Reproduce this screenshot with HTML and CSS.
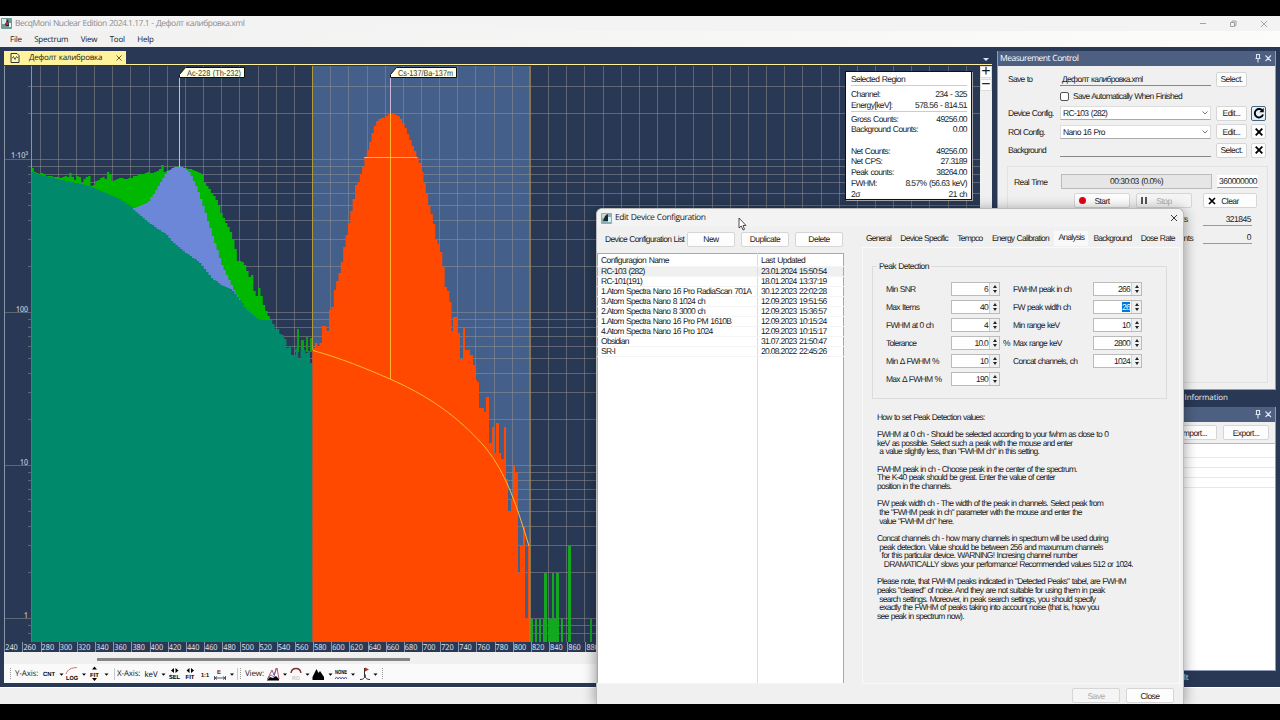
FILE: index.html
```html
<!DOCTYPE html>
<html lang="en">
<head>
    <meta charset="UTF-8">
    <meta name="viewport" content="width=device-width, initial-scale=1.0">
    <title>BecqMoni Nuclear Edition</title>
    <link rel="stylesheet" href="styles.css">
</head>
<body>
    <div class="app">
        <header class="titlebar">
            <svg class="app-icon" viewBox="0 0 11 11"><rect width="11" height="11" rx="1" fill="#6d9c99"/><path d="M1 1h4v5H1z" fill="#d8ecea"/><path d="M2 2l2 4 3-5 1 7H5z" fill="#1d2530"/><path d="M5 4h2v3H5z" fill="#c02a3a"/><path d="M8 5h2v4H8z" fill="#e8f4f4"/></svg>
            <span class="title-text">BecqMoni Nuclear Edition 2024.1.17.1 - Дефолт калибровка.xml</span>
            <svg class="win-buttons" viewBox="0 0 70 14"><path d="M0 6.500h6M61 4l6 6M67 4l-6 6M30.500 5.500h4v4h-4zM32 5.500v-1.500h4v4.500h-1.500" fill="none" stroke="#9a9a9a" stroke-width=".9"/></svg>
        </header>
        <nav class="menu">
            <span>File</span><span>Spectrum</span><span>View</span><span>Tool</span><span>Help</span>
        </nav>

        <div class="workspace">
            <main class="document">
                <div class="doc-tabs">
                    <div class="doc-tab">
                        <svg class="doc-icon" viewBox="0 0 10 10"><path d="M1 .5h6l2 2v7H1z" fill="#fff6b0" stroke="#333"/><path d="M2 5.500l1.500-2 1.500 3 1.500-3L8 5" fill="none" stroke="#333" stroke-width=".8"/></svg>
                        <span>Дефолт калибровка</span>
                        <svg class="tab-close" viewBox="0 0 6 6"><path d="M.5.5l5 5M5.500.5l-5 5" stroke="#6a6030"/></svg>
                    </div>
                    <i class="drop"></i>
                </div>
                <div class="chart-row">
                    <svg id="chart" class="chart" viewBox="4 66 976 586"></svg>
                    <div class="chart-zoom"><b>+</b><b>−</b></div>
                    <div class="region-box">
                        <h4>Selected Region</h4>
                        <p><span>Channel:</span><span>234 - 325</span></p>
                        <p class="line"><span>Energy[keV]:</span><span>578.56 - 814.51</span></p>
                        <p><span>Gross Counts:</span><span>49256.00</span></p>
                        <p class="gap"><span>Background Counts:</span><span>0.00</span></p>
                        <p><span>Net Counts:</span><span>49256.00</span></p>
                        <p><span>Net CPS:</span><span>27.3189</span></p>
                        <p><span>Peak counts:</span><span>38264.00</span></p>
                        <p><span>FWHM:</span><span>8.57% (56.63 keV)</span></p>
                        <p><span>2σ</span><span>21 ch</span></p>
                    </div>
                </div>
                <div class="scrollbar"><div class="thumb"></div></div>
                <div class="toolbar">
                    <i class="grip"></i><span class="lbl y-lbl">Y-Axis:</span>
                    <svg class="tools" viewBox="42 0 72 18"><g class="pix"><text x="43" y="11" textLength="12" lengthAdjust="spacingAndGlyphs">CNT</text><text x="66" y="14.500" textLength="12" lengthAdjust="spacingAndGlyphs">LOG</text><text x="90" y="11.500" textLength="9" lengthAdjust="spacingAndGlyphs">FIT</text></g><path d="M66 9c2-5 5-6 11-6.500" fill="none" stroke="#c77"/><path d="M94.500 1.500l2.500 3h-5zM94.500 16l2.500-3h-5zM59.500 8.500h4l-2 2.200zM82 8.500h4l-2 2.200zM104.500 8.500h4l-2 2.200z"/></svg>
                    <i class="sep"></i><span class="lbl x-lbl">X-Axis:</span>
                    <svg class="tools" viewBox="143 0 93 18"><g class="pix"><text class="kev" x="143.500" y="11.500" textLength="13" lengthAdjust="spacingAndGlyphs">keV</text><text x="168" y="14" textLength="11" lengthAdjust="spacingAndGlyphs">SEL</text><text x="184.500" y="14" textLength="9" lengthAdjust="spacingAndGlyphs">FIT</text><text x="200" y="11.500" textLength="8" lengthAdjust="spacingAndGlyphs">1:1</text><text x="216" y="9" fill="#8b2020">E</text></g><path d="M160.500 8.500h4l-2 2.200zM229 8.500h4l-2 2.200zM173 3v5l-3-2.500zM174.500 3v5l3-2.500zM188.500 3v5l-3-2.500zM190 3v5l3-2.500z"/><path d="M213.500 11v4M224.500 11v4M214 13h10M216 11.500l-2 1.500 2 1.500M222 11.500l2 1.500-2 1.500" fill="none" stroke="#446" stroke-width=".9"/></svg>
                    <i class="sep"></i><i class="grip g2"></i><span class="lbl v-lbl">View:</span>
                    <svg class="tools" viewBox="267 0 115 18"><path d="M267 15l3-3 3 1 3-2 3 3v1.500h-12z"/><path d="M268 13l4-8 2 5 3-7 2 11" fill="none" stroke="#b04060" stroke-width=".9"/><path d="M267 14l4-4 3 2 2-9" fill="none" stroke="#5858b0" stroke-width=".8"/><path d="M283 8.500h4l-2 2.200zM305.500 8.500h4l-2 2.200zM328.500 8.500h4l-2 2.200zM351 8.500h4l-2 2.200zM373.500 8.500h4l-2 2.200z"/><path d="M291 8c1-6 9-6 10 0" fill="none" stroke="#7a3030" stroke-width="1.400"/><path d="M312.500 15v-3l4-8 2 4 1.500-2 4 6v3z"/><g class="pix"><text x="292" y="14.500" textLength="8" lengthAdjust="spacingAndGlyphs" fill="#ccc">RO</text><text x="335" y="9" textLength="12" lengthAdjust="spacingAndGlyphs">NONE</text></g><path d="M335 14l1.500-2 1.500 2 1.500-2 1.500 2 1.500-2 1.500 2 1.500-2 1.500 2" fill="none" stroke="#5555b0"/><path d="M360 14.500c3 0 5-1 5-5 0 4 2 5 5 5M364.500 3v9" fill="none" stroke="#333"/><path d="M365 2.500l4 2-4 2z" fill="#c22"/></svg>
                    <i class="grip g3"></i>
                </div>
            </main>

            <aside class="side">
                <section class="panel measure">
                    <h3 class="panel-head">Measurement Control <svg viewBox="0 0 18 9"><path d="M1.500 4.500h5M2.500 4.500v-4h3v4M4 4.500v4M11.500 1.500l5.500 5.500M17 1.500l-5.500 5.500" fill="none" stroke="#dfe5f0" stroke-width="1.100"/></svg></h3>
                    <div class="panel-body">
                        <div class="row"><label>Save to</label><span class="under">Дефолт калибровка.xml</span><span class="btn">Select.</span></div>
                        <div class="row check"><i class="checkbox"></i><span>Save Automatically When Finished</span></div>
                        <div class="row"><label>Device Config.</label><span class="combo">RC-103 (282)<svg viewBox="0 0 6 4"><path d="M.5.5L3 3 5.500.5" fill="none" stroke="#666" stroke-width=".9"/></svg></span><span class="btn">Edit...</span><span class="btn sq hot"><svg viewBox="0 0 12 12"><path d="M9.700 4.200A4.200 4.200 0 1 0 10 7.500" fill="none" stroke="#000" stroke-width="1.900"/><path d="M10.700 1v4.300H6.400z"/></svg></span></div>
                        <div class="row"><label>ROI Config.</label><span class="combo">Nano 16 Pro<svg viewBox="0 0 6 4"><path d="M.5.5L3 3 5.500.5" fill="none" stroke="#666" stroke-width=".9"/></svg></span><span class="btn">Edit...</span><span class="btn sq"><svg viewBox="0 0 12 12"><path d="M2.700 2.700l6.600 6.600M9.300 2.700L2.700 9.300" stroke="#000" stroke-width="1.900"/></svg></span></div>
                        <div class="row"><label>Background</label><span class="under"></span><span class="btn">Select.</span><span class="btn sq"><svg viewBox="0 0 12 12"><path d="M2.700 2.700l6.600 6.600M9.300 2.700L2.700 9.300" stroke="#000" stroke-width="1.900"/></svg></span></div>
                        <div class="time-box">
                            <div class="row"><label>Real Time</label><span class="progress">00:30:03 (0.0%)</span><span class="num limit">360000000</span></div>
                            <div class="row actions"><span class="btn"><i class="rec"></i>Start</span><span class="btn off"><i class="pause"></i>Stop</span><span class="btn clear"><svg viewBox="0 0 8 8"><path d="M1 1l6 6M7 1L1 7" stroke="#000" stroke-width="1.700"/></svg>Clear</span></div>
                            <div class="row count"><label>Total Counts</label><span class="num">321845</span></div>
                            <div class="row count"><label>Invalid Counts</label><span class="num">0</span></div>
                        </div>
                    </div>
                </section>
                <div class="panel-tabs"><span>Sample Information</span></div>
                <section class="panel result">
                    <h3 class="panel-head">&nbsp;<svg viewBox="0 0 18 9"><path d="M1.500 4.500h5M2.500 4.500v-4h3v4M4 4.500v4M11.500 1.500l5.500 5.500M17 1.500l-5.500 5.500" fill="none" stroke="#dfe5f0" stroke-width="1.100"/></svg></h3>
                    <div class="io"><span class="btn">Import...</span><span class="btn">Export...</span></div>
                    <div class="lines"><hr><hr><hr><hr></div>
                </section>
                <div class="panel-tabs bottom"><span>Result</span></div>
            </aside>
        </div>
        <footer class="status"></footer>

        <div class="dialog">
            <div class="dlg-title">
                <svg class="app-icon" viewBox="0 0 11 11"><rect width="11" height="11" rx="1" fill="#86b3b8"/><path d="M1 1h4v4H1z" fill="#c9d9c8"/><path d="M2 8l2-5 3-2v7z" fill="#1d2530"/><path d="M7 4h3v5H7z" fill="#d8eef0"/></svg>
                <span>Edit Device Configuration</span>
                <svg class="dlg-close" viewBox="0 0 8 8"><path d="M1 1l6 6M7 1L1 7" stroke="#222" stroke-width=".9"/></svg>
            </div>
            <div class="dlg-body">
                <div class="dlg-left">
                    <div class="list-head"><span>Device Configuration List</span><span class="btn">New</span><span class="btn">Duplicate</span><span class="btn">Delete</span></div>
                    <table class="configs">
                        <tr><th>Configuragion Name</th><th>Last Updated</th></tr>
                        <tr class="sel"><td>RC-103 (282)</td><td>23.01.2024 15:50:54</td></tr>
                        <tr><td>RC-101(191)</td><td>18.01.2024 13:37:19</td></tr>
                        <tr><td>1.Atom Spectra Nano 16 Pro RadiaScan 701A</td><td>30.12.2023 22:02:28</td></tr>
                        <tr><td>3.Atom Spectra Nano 8 1024 ch</td><td>12.09.2023 19:51:56</td></tr>
                        <tr><td>2.Atom Spectra Nano 8 3000 ch</td><td>12.09.2023 15:36:57</td></tr>
                        <tr><td>1.Atom Spectra Nano 16 Pro PM 1610B</td><td>12.09.2023 10:15:24</td></tr>
                        <tr><td>4.Atom Spectra Nano 16 Pro 1024</td><td>12.09.2023 10:15:17</td></tr>
                        <tr><td>Obsidian</td><td>31.07.2023 21:50:47</td></tr>
                        <tr><td>SR-I</td><td>20.08.2022 22:45:26</td></tr>
                        <tr class="rest"><td></td><td></td></tr>
                    </table>
                </div>
                <div class="dlg-right">
                    <div class="tabs"><span>General</span><span>Device Specific</span><span>Tempco</span><span>Energy Calibration</span><span class="on">Analysis</span><span>Background</span><span>Dose Rate</span></div>
                    <div class="tab-page">
                        <fieldset>
                            <legend>Peak Detection</legend>
                            <div class="fields">
                                <label>Min SNR</label><span class="spin">6</span><i></i><label>FWHM peak in ch</label><span class="spin">266</span>
                                <label>Max Items</label><span class="spin">40</span><i></i><label>FW peak width ch</label><span class="spin"><mark>26</mark></span>
                                <label>FWHM at 0 ch</label><span class="spin">4</span><i></i><label>Min range keV</label><span class="spin">10</span>
                                <label>Tolerance</label><span class="spin">10.0</span><i>%</i><label>Max range keV</label><span class="spin">2800</span>
                                <label>Min Δ FWHM %</label><span class="spin">10</span><i></i><label>Concat channels, ch</label><span class="spin">1024</span>
                                <label>Max Δ FWHM %</label><span class="spin">190</span>
                            </div>
                        </fieldset>
                        <div class="help">How to set Peak Detection values:

FWHM at 0 ch - Should be selected according to your fwhm as close to 0
keV as possible. Select such a peak with the mouse and enter
 a value slightly less, than "FWHM ch" in this setting.

FWHM peak in ch - Choose peak in the center of the spectrum.
The K-40 peak should be great. Enter the value of center
position in the channels.

FW peak width ch - The width of the peak in channels. Select peak from
 the "FWHM peak in ch" parameter with the mouse and enter the
 value "FWHM ch" here.

Concat channels ch - how many channels in spectrum will be used during
 peak detection. Value should be between 256 and maxumum channels
  for this particular device. WARNING! Incresing channel number
   DRAMATICALLY slows your performance! Recommended values 512 or 1024.

Please note, that FWHM peaks indicated in "Detected Peaks" tabel, are FWHM
peaks "cleared" of noise. And they are not suitable for using them in peak
 search settings. Moreover, in peak search settings, you should specify
 exactly the FWHM of peaks taking into account noise (that is, how you
see peak in spectrum now).</div>
                    </div>
                    <div class="dlg-foot"><span class="btn off">Save</span><span class="btn">Close</span></div>
                </div>
            </div>
            <svg class="cursor" viewBox="0 0 9 14"><path d="M1 1v10l2.300-2 1.700 4 1.500-.7L5 8.500h3z" fill="#fff" stroke="#222" stroke-width=".8"/></svg>
        </div>
    </div>
    <script src="chart.js"></script>
</body>
</html>
```
FILE: styles.css
```css
* {
    box-sizing: border-box;
}

body {
    margin: 0;
    padding: 16px 0;
    height: 720px;
    overflow: hidden;
    background: #000;
    color: #1a1a1a;
    font: 8.5px/10px "Liberation Sans", Arial, sans-serif;
    letter-spacing: -0.74px;
    word-spacing: 0.6px;
    text-rendering: geometricPrecision;
}

.app {
    position: relative;
    display: flex;
    flex-direction: column;
    height: 688px;
    overflow: hidden;
    background: #293955;
}

.titlebar {
    display: flex;
    align-items: center;
    height: 15px;
    background: #f3f3f3;
    color: #8c8c8c;
    font-family: "Open Sans", "Noto Sans", sans-serif;
    font-size: 8.5px;
}

.title-text {
    flex: 1;
    margin-left: 3px;
    letter-spacing: -0.5px;
    white-space: nowrap;
}

.app-icon {
    width: 11px;
    height: 11px;
    margin-left: 1px;
}

.win-buttons {
    width: 70px;
    height: 14px;
    margin-right: 10px;
}

.menu {
    display: flex;
    gap: 12.5px;
    height: 16px;
    padding: 4px 10px 2px;
    background: linear-gradient(90deg, #f0f0f0, #fcfcfa);
    font-family: "Open Sans", "Noto Sans", sans-serif;
    font-size: 8px;
    letter-spacing: -0.25px;
}

.workspace {
    display: flex;
    gap: 5px;
    height: 640px;
    padding: 4px;
}

.document {
    display: flex;
    flex-direction: column;
    width: 988px;
}

.doc-tabs {
    display: flex;
    align-items: flex-end;
    justify-content: space-between;
    height: 14px;
    margin-bottom: 1px;
    border-bottom: 1px solid #fff29d;
}

.doc-tab {
    display: flex;
    align-items: center;
    width: 122px;
    height: 13px;
    padding-left: 6px;
    background: #fff29d;
    font-family: "Open Sans", "Noto Sans", sans-serif;
    font-size: 8px;
    letter-spacing: -0.25px;
    white-space: nowrap;
}

.doc-tab span {
    width: 87px;
    margin-left: 9px;
}

.doc-icon {
    width: 10px;
    height: 10px;
}

.tab-close {
    width: 6px;
    height: 6px;
}

.drop {
    border: 3px solid transparent;
    border-top-color: #dfe5f0;
    border-bottom: 0;
    margin: 0 3px 3px 0;
}

.chart-row {
    position: relative;
    display: flex;
    height: 586px;
}

.chart {
    display: block;
    width: 976px;
    height: 586px;
    background: #293955;
}

.chart rect {
    shape-rendering: crispEdges;
}

.chart text {
    fill: #e6ebf2;
    font: 8px "Open Sans", sans-serif;
    letter-spacing: 0;
}

.chart .flag {
    fill: #333;
    font: 8.5px "Liberation Sans", sans-serif;
}

.chart-zoom {
    width: 12px;
    background: #f0f0f0;
}

.chart-zoom b {
    display: block;
    height: 12px;
    margin-bottom: 1px;
    background: #fff;
    border: 1px solid #ddd;
    font: 16px/10px "Liberation Sans", sans-serif;
    letter-spacing: 0;
    text-align: center;
}

.region-box {
    position: absolute;
    left: 841px;
    top: 5px;
    width: 127px;
    height: 129px;
    padding: 2px 4px 0 5px;
    background: #fff;
    border: 1px solid #111;
    box-shadow: 1px 1px 0 #aaa;
    letter-spacing: -0.59px;
}

.region-box h4 {
    margin: 0 0 4px;
    height: 12px;
    padding-top: 1px;
    border-bottom: 1px solid #ccc;
    font-size: 8.5px;
    font-weight: normal;
    line-height: 9px;
}

.region-box p {
    display: flex;
    justify-content: space-between;
    margin: 0;
    height: 10.7px;
    line-height: 8px;
}

.region-box .line {
    height: 11px;
    margin-bottom: 3px;
    border-bottom: 1px solid #ccc;
}

.region-box .gap {
    height: 21.4px;
}

.scrollbar {
    height: 12px;
    padding: 6px 0 0 93px;
    background: #f0f0f0;
}

.thumb {
    width: 313px;
    height: 3px;
    background: #858585;
}

.toolbar {
    display: flex;
    align-items: center;
    height: 19px;
    background: #fafafa;
    font-family: "Open Sans", sans-serif;
    font-size: 8px;
    letter-spacing: -0.15px;
}

.tools {
    height: 18px;
    flex: none;
}

.tools:nth-of-type(1) { width: 72px; }
.tools:nth-of-type(2) { width: 93px; }
.tools:nth-of-type(3) { width: 115px; }

.pix text {
    font: bold 6px "Liberation Sans", sans-serif;
    letter-spacing: 0;
}

.pix .kev {
    font: 8px "Open Sans", sans-serif;
}

.lbl { flex: none; white-space: nowrap; }
.y-lbl { width: 27px; margin-left: 4px; }
.x-lbl { width: 27px; margin-left: 2px; }
.v-lbl { width: 22px; margin-left: 4px; }

.grip {
    width: 1px;
    height: 11px;
    margin-left: 6px;
    border-left: 1px dotted #999;
}

.grip.g2 { margin-left: 2px; }
.grip.g3 { margin-left: 0; }

.sep {
    width: 1px;
    height: 12px;
    background: #c8c8c8;
}

.side {
    width: 279px;
}

.panel {
    background: #f0f0f0;
    border: 1px solid #8e9bbc;
    border-width: 0 1px 1px;
}

.panel-head {
    display: flex;
    justify-content: space-between;
    align-items: center;
    height: 15px;
    margin: 0;
    padding: 0 3px 0 2px;
    background: #4d6082;
    color: #fff;
    font: 8.5px/17px "Open Sans", sans-serif;
    letter-spacing: -0.55px;
}

.measure .panel-head {
    letter-spacing: -0.5px;
}

.panel-head svg {
    width: 18px;
    height: 9px;
}

.measure {
    height: 339px;
}

.panel-body {
    padding: 4px 8px 0 10px;
}

.row {
    display: flex;
    align-items: center;
    height: 18.5px;
    gap: 5px;
}

.row label {
    width: 47px;
    white-space: nowrap;
}

.check {
    height: 15.5px;
    padding-left: 52px;
    gap: 4px;
}

.checkbox {
    width: 9px;
    height: 9px;
    background: #fff;
    border: 1px solid #555;
    border-radius: 2px;
}

.under,
.combo {
    width: 151px;
    height: 14px;
    padding: 2px;
    border-bottom: 1px solid #888;
    white-space: nowrap;
}

.under {
    letter-spacing: -0.7px;
}

.combo {
    display: flex;
    align-items: center;
    justify-content: space-between;
    background: #fff;
    border: 1px solid #ddd;
    border-bottom-color: #aaa;
    letter-spacing: -0.65px;
}

.combo svg {
    width: 6px;
    height: 4px;
}

.btn {
    display: flex;
    align-items: center;
    justify-content: center;
    height: 15px;
    background: #fdfdfd;
    border: 1px solid #d6d6d6;
    border-radius: 2px;
    letter-spacing: -0.55px;
    white-space: nowrap;
}

.row > .btn {
    width: 31px;
}

.row > .sq {
    width: 15px;
    margin-left: -1px;
}

.sq svg {
    width: 12px;
    height: 12px;
    flex: none;
}

.row > .hot {
    background: #e5f1fb;
    border-color: #46687d;
}

.off {
    background: #f5f5f5;
    color: #aaa;
}

.time-box {
    height: 217px;
    margin: 6px -1px 0 -1px;
    padding-top: 6px;
    border: 1px solid #e2e2e2;
}

.time-box .row {
    padding-left: 6px;
    gap: 5px;
}

.time-box label {
    width: 42px;
    letter-spacing: -0.6px;
}

.progress {
    width: 151px;
    height: 15px;
    background: #e6e6e6;
    border: 1px solid #bbb;
    letter-spacing: -0.55px;
    line-height: 13px;
    text-align: center;
}

.num {
    width: 49px;
    padding: 1px;
    border-bottom: 1px solid #999;
    letter-spacing: -0.5px;
    text-align: right;
}

.limit {
    width: 41px;
    background: #fff;
}

.time-box .actions {
    height: 19px;
    padding-left: 66px;
    gap: 6px;
}

.actions > .btn {
    position: relative;
    width: 56px;
}

.row > .clear {
    width: 54px;
    margin-left: 5px;
}

.actions svg,
.rec,
.pause {
    position: absolute;
    left: 4px;
    width: 8px;
    height: 8px;
}

.rec {
    width: 7px;
    height: 7px;
    border-radius: 50%;
    background: #e3001b;
}

.pause {
    left: 4px;
    width: 6px;
    height: 7px;
    border: 2px solid #555;
    border-width: 0 2px;
}

.time-box .count {
    justify-content: flex-end;
    padding-right: 15px;
    gap: 9px;
}

.time-box .count label {
    width: 47px;
}

.panel-tabs {
    height: 17px;
    padding: 3px 0 0 158px;
    color: #e8ecf4;
    font-family: "Open Sans", sans-serif;
    font-size: 8px;
    letter-spacing: -0.1px;
}

.bottom {
    padding: 2px 0 0 169px;
}

.result {
    height: 264px;
    background: #fff;
}

.io {
    display: flex;
    justify-content: flex-end;
    gap: 6px;
    height: 22px;
    padding: 3px 6px;
    background: #f0f0f0;
    border-bottom: 1px solid #bbb;
}

.io .btn {
    width: 46px;
}

.lines {
    padding-top: 13px;
}

.lines hr {
    margin: 0 0 9px;
    border: 0;
    border-top: 1px solid #e8e8e8;
}

.status {
    height: 17px;
    background: #f0f0f0;
    border-top: 1px solid #fff;
}

.dialog {
    position: absolute;
    left: 596px;
    top: 192px;
    width: 588px;
    height: 496px;
    background: #f0f0f0;
    border: 1px solid #bbb;
    border-bottom: 0;
    border-radius: 6px 6px 0 0;
    box-shadow: 0 2px 14px rgba(0, 0, 0, 0.4);
}

.dlg-title {
    display: flex;
    align-items: center;
    height: 18px;
    padding: 0 5px 0 3px;
    background: #f3f3f3;
    border-radius: 6px 6px 0 0;
    font-family: "Open Sans", sans-serif;
    font-size: 8.5px;
    letter-spacing: -0.42px;
}

.dlg-title span {
    flex: 1;
    margin-left: 3px;
}

.dlg-close {
    width: 8px;
    height: 8px;
}

.dlg-body {
    display: flex;
    gap: 18px;
}

.dlg-left {
    width: 247px;
}

.list-head {
    display: flex;
    align-items: center;
    gap: 6px;
    height: 26px;
    padding-bottom: 2px;
}

.list-head span:first-child {
    width: 76px;
    margin-left: 8px;
    letter-spacing: -0.66px;
    white-space: nowrap;
}

.list-head .btn {
    width: 48px;
}

.configs {
    width: 247px;
    height: 431px;
    background: #fff;
    border: 1px solid #a9a9a9;
    border-collapse: collapse;
    letter-spacing: -0.72px;
    word-spacing: 0.8px;
    table-layout: fixed;
    text-align: left;
}

.configs th,
.configs td {
    height: 10px;
    padding: 0 0 0 3px;
    border-bottom: 1px solid #f4f4f4;
    line-height: 9px;
    white-space: nowrap;
}

.configs td:last-child {
    letter-spacing: -0.7px;
}

.configs th {
    height: 13px;
    padding: 2px 0 1px 3px;
    font-weight: normal;
    letter-spacing: -0.6px;
}

.configs th:first-child {
    width: 160px;
}

.configs td:first-child,
.configs th:first-child {
    border-right: 1px solid #ddd;
}

.configs .sel {
    background: #f0f0f0;
}

.configs .rest td {
    height: auto;
}

.dlg-right {
    width: 318px;
}

.tabs {
    display: flex;
    align-items: center;
    height: 18px;
    margin-top: 2px;
    padding-left: 4px;
    gap: 9.3px;
    white-space: nowrap;
}

.tabs .on {
    height: 15px;
    margin: 0 -4px;
    padding: 1px 4px;
    background: #f9f9f9;
}

.tab-page {
    height: 437px;
    padding: 13px 12px 0 9px;
    border: 1px solid #fafafa;
}

fieldset {
    height: 138px;
    margin: 0;
    padding: 11px 0 0 13px;
    border: 1px solid #dcdcdc;
}

legend {
    margin-left: -9px;
    padding: 0 2px;
    letter-spacing: -0.6px;
}

.fields {
    display: grid;
    grid-template-columns: 65px 49px 13px 80px 49px;
    grid-auto-rows: 18px;
    align-items: start;
    line-height: 14px;
    white-space: nowrap;
}

.fields i {
    padding-left: 3px;
    font-style: normal;
}

.spin {
    position: relative;
    height: 14px;
    padding-right: 11px;
    background: linear-gradient(90deg, #fff 37px, #d0d0d0 37px, #d0d0d0 38px, #f0f0f0 38px);
    border: 1px solid #bbb;
    line-height: 12px;
    text-align: right;
}

.spin::before,
.spin::after {
    content: "";
    position: absolute;
    right: 2px;
    top: 2px;
    border: 2.5px solid transparent;
    border-bottom: 3px solid #222;
    border-top: 0;
}

.spin::after {
    top: 7px;
    border-bottom: 0;
    border-top: 3px solid #222;
}

.spin mark {
    background: #0078d7;
    color: #fff;
}

.help {
    margin: 13.5px 0 0 5px;
    letter-spacing: -0.77px;
    word-spacing: 0.7px;
    line-height: 8.67px;
    white-space: pre;
}

.dlg-foot {
    display: flex;
    justify-content: flex-end;
    gap: 6px;
    padding: 4px 6px 0 0;
}

.dlg-foot .btn {
    width: 48px;
}

.cursor {
    position: absolute;
    left: 141px;
    top: 8px;
    width: 9px;
    height: 14px;
}
```
FILE: chart.js
```js
const svg = document.getElementById('chart');
const BOTTOM = 642;
const CH = 2.36; // width of one channel

const green = '31,167 34,172 38,174 42,173 45,176 50,176 55,177 60,178 65,176 66,180 68,173 71,173 72,179 74,180 76,176 79,177 81,183 84,178 87,176 89,176 90,185 92,188 94,181 97,180 100,178 103,177 105,179 107,172 109,172 110,178 112,182 114,180 120,178 125,179 130,178 133,176 134,179 136,175 140,174 145,173 148,171 150,174 155,172 158,171 160,166 162,165 163,172 168,170 172,168 178,166 184,168 190,169 193,171 200,173 201,174 204,184 208,188 213,196 217,202 220,212 225,223 229,230 233,241 235,252 237,262 241,261 245,267 248,277 251,275 253,289 255,298 258,288 260,294 262,303 265,311 268,317 270,319';
const teal = '31,172 40,175 50,177 60,180 70,182 80,184 90,187 100,191 110,195 120,200 130,206 132,209 140,216 150,224 160,231 165,234 170,240 175,245 180,249 185,253 190,256 195,260 200,264 205,270 210,277 220,285 228,288 232,291 236,296 240,301 245,309 250,313 255,318 260,320 268,320 271,320 273,327 275,330 278,328 280,337 283,333 285,345 287,349 289,346 291,355 293,357 295,347 297,350 298.5,362 300,350 303,350 304.5,357 306,350 308.5,351 310,363 312,351';
const blue = '131,208 137,207 142,205 147,202 152,195 157,187 162,178 167,171 172,168 178,166 184,168 188,172 192,179 196,188 200,199 204,211 208,224 212,237 216,249 220,262 225,273 230,284 235,294 240,301';
const orange = '312,350 313,345 315,343 317,345 318,349 320,342 322,325 324,325 325,329 327,331 329,310 330,304 332,308 333,293 336,281 338,275 340,265 342,257 343,248 345,238 347,227 349,219 351,207 354,192 355,185 358,181 360,173 362,167 364,158 366,154 368,145 370,139 372,131 374,126 376,121 379,119 382,118 385,117 387,114 389,112 392,114 396,115 400,119 404,127 408,137 412,147 416,156 420,167 422,177 424,185 427,201 430,212 433,225 435,240 437,244 439,245 441,259 443,272 445,290 448,291 449,300 451,309';
// single channels at the end of the peak: left, right, top
const tail = [[451,453,331],[453,458,317],[458,460,333],[460,462.5,359],[462.5,465,328],[465,470,350],[470,473,355],[473,475,365],[475,477,380],[477,479,382],[479,484,408],[484,486,412],[486,489,397],[489,491.5,443],[491.5,494,427],[494,496,453],[496,498.5,423],[498.5,501,453],[501,503.5,459],[503.5,506,427],[506,508,479],[508,510.5,512],[510.5,512.5,499],[512.5,514.5,466],[514.5,517.7,472],[517.7,520,573],[520,523,546],[523,525,527],[525,527.5,618],[527.5,530,546]];
const low = [[530,533,619],[535,537,619],[539,541,619],[543,547,619],[544,547,573],[548,553,619],[551.5,553.5,573],[556,559,573],[554,556,619],[561,563,619],[568,571,546],[589.5,592,619]];
const out = [];

function line(x1, y1, x2, y2, color) {
    out.push(`<path d="M${x1},${y1}L${x2},${y2}" stroke="${color}" fill="none"/>`);
}

function rect(x, y, x2, y2, color) {
    out.push(`<rect x="${x}" y="${y}" width="${x2 - x}" height="${y2 - y}" fill="${color}"/>`);
}

function steps(data, color) {
    const pts = data.split(' ').map(p => p.split(',').map(Number));
    const last = pts[pts.length - 1][0];
    let d = `M${pts[0][0] + 0.5},${BOTTOM}`;
    let i = 0;
    for (let x = pts[0][0] + 0.5; x < last; x += CH) {
        while (i < pts.length - 2 && pts[i + 1][0] < x) i++;
        const [ax, ay] = pts[i];
        const [bx, by] = pts[i + 1];
        const y = Math.round(ay + (by - ay) * (x - ax) / (bx - ax));
        d += `V${y}H${Math.min(x + CH, last + 0.5)}`;
    }
    out.push(`<path d="${d}V${BOTTOM}Z" fill="${color}"/>`);
}

rect(312.5, 66, 530, BOTTOM, '#44608a');
for (let i = 1; i < 55; i++) {
    const x = Math.round(4.3 + i * 18.16) - 0.5;
    if (x > 32 && x < 980) line(x, 66, x, BOTTOM, 'rgba(150,145,140,.5)');
}
for (let d = -1; d < 4; d++) {
    for (let n = 1; n < 10; n++) {
        const y = Math.round(618 - 153.1 * (d + Math.log10(n))) + 0.5;
        if (y > 68 && y < BOTTOM) line(n === 1 ? 4 : 28, y, 980, y, 'rgba(150,150,150,.5)');
    }
}
line(4.5, 66, 4.5, BOTTOM, '#8b95a8');
line(31.5, 66, 31.5, BOTTOM, '#8b95a8');

steps(green, '#00b800');
for (const [a, b, y] of [[295,297,350],[296.5,299,329],[301,303.5,340],[305.5,308,337],[309.5,312.5,338]]) rect(a, y, b, 352, '#0ba012');
steps(blue, '#6d87d8');
steps(teal, '#00896b');
steps(orange, '#ff4800');
for (const [a, b, y] of tail) rect(a, y, b, BOTTOM, '#ff4800');
for (const [a, b, y] of low) rect(a, y, b, BOTTOM, '#12a820');

line(312.5, 66, 312.5, 350, '#b09a35');
line(530, 66, 530, BOTTOM, '#b08a35');
line(179.5, 77, 179.5, 167, '#c9b8d8');
line(390.5, 77, 390.5, 113, '#c9b8d8');
line(390.5, 113, 390.5, 379, '#ffb830');
line(364, 157.5, 417, 157.5, '#ffb830');
out.push('<path d="M313,350.5 C340,358 365,368 390,379 C440,401 465,425 485,447 C507,474 517,507 529,546" fill="none" stroke="#ffb830"/>');

function flag(x, w, text) {
    out.push(`<path d="M${x},77.5V74.5L${x + 6},67.5H${x + w}V77.5Z" fill="#ffffe6" stroke="#111"/>`);
    out.push(`<text class="flag" x="${x + 7.5}" y="75.5" textLength="${w - 11}" lengthAdjust="spacingAndGlyphs">${text}</text>`);
}
flag(179.5, 65, 'Ac-228 (Th-232)');
flag(390.5, 66, 'Cs-137/Ba-137m');

rect(4, BOTTOM, 980, 652, '#293955');
for (let e = 240; e <= 880; e += 20) {
    const x = 4.3 + (e - 240) / 20 * 18.16;
    line(Math.round(x) + 0.5, BOTTOM, Math.round(x) + 0.5, 652, '#8b95a8');
    out.push(`<text x="${x + 1}" y="650" textLength="12.5" lengthAdjust="spacingAndGlyphs">${e}</text>`);
}
const marks = [['1·10³', 158, 17], ['100', 311.5, 12], ['10', 464.5, 8], ['1', 618, 4]];
for (const [t, y, w] of marks) {
    out.push(`<text x="${28 - w}" y="${y}" textLength="${w}" lengthAdjust="spacingAndGlyphs">${t}</text>`);
}
svg.innerHTML = out.join('');
```
